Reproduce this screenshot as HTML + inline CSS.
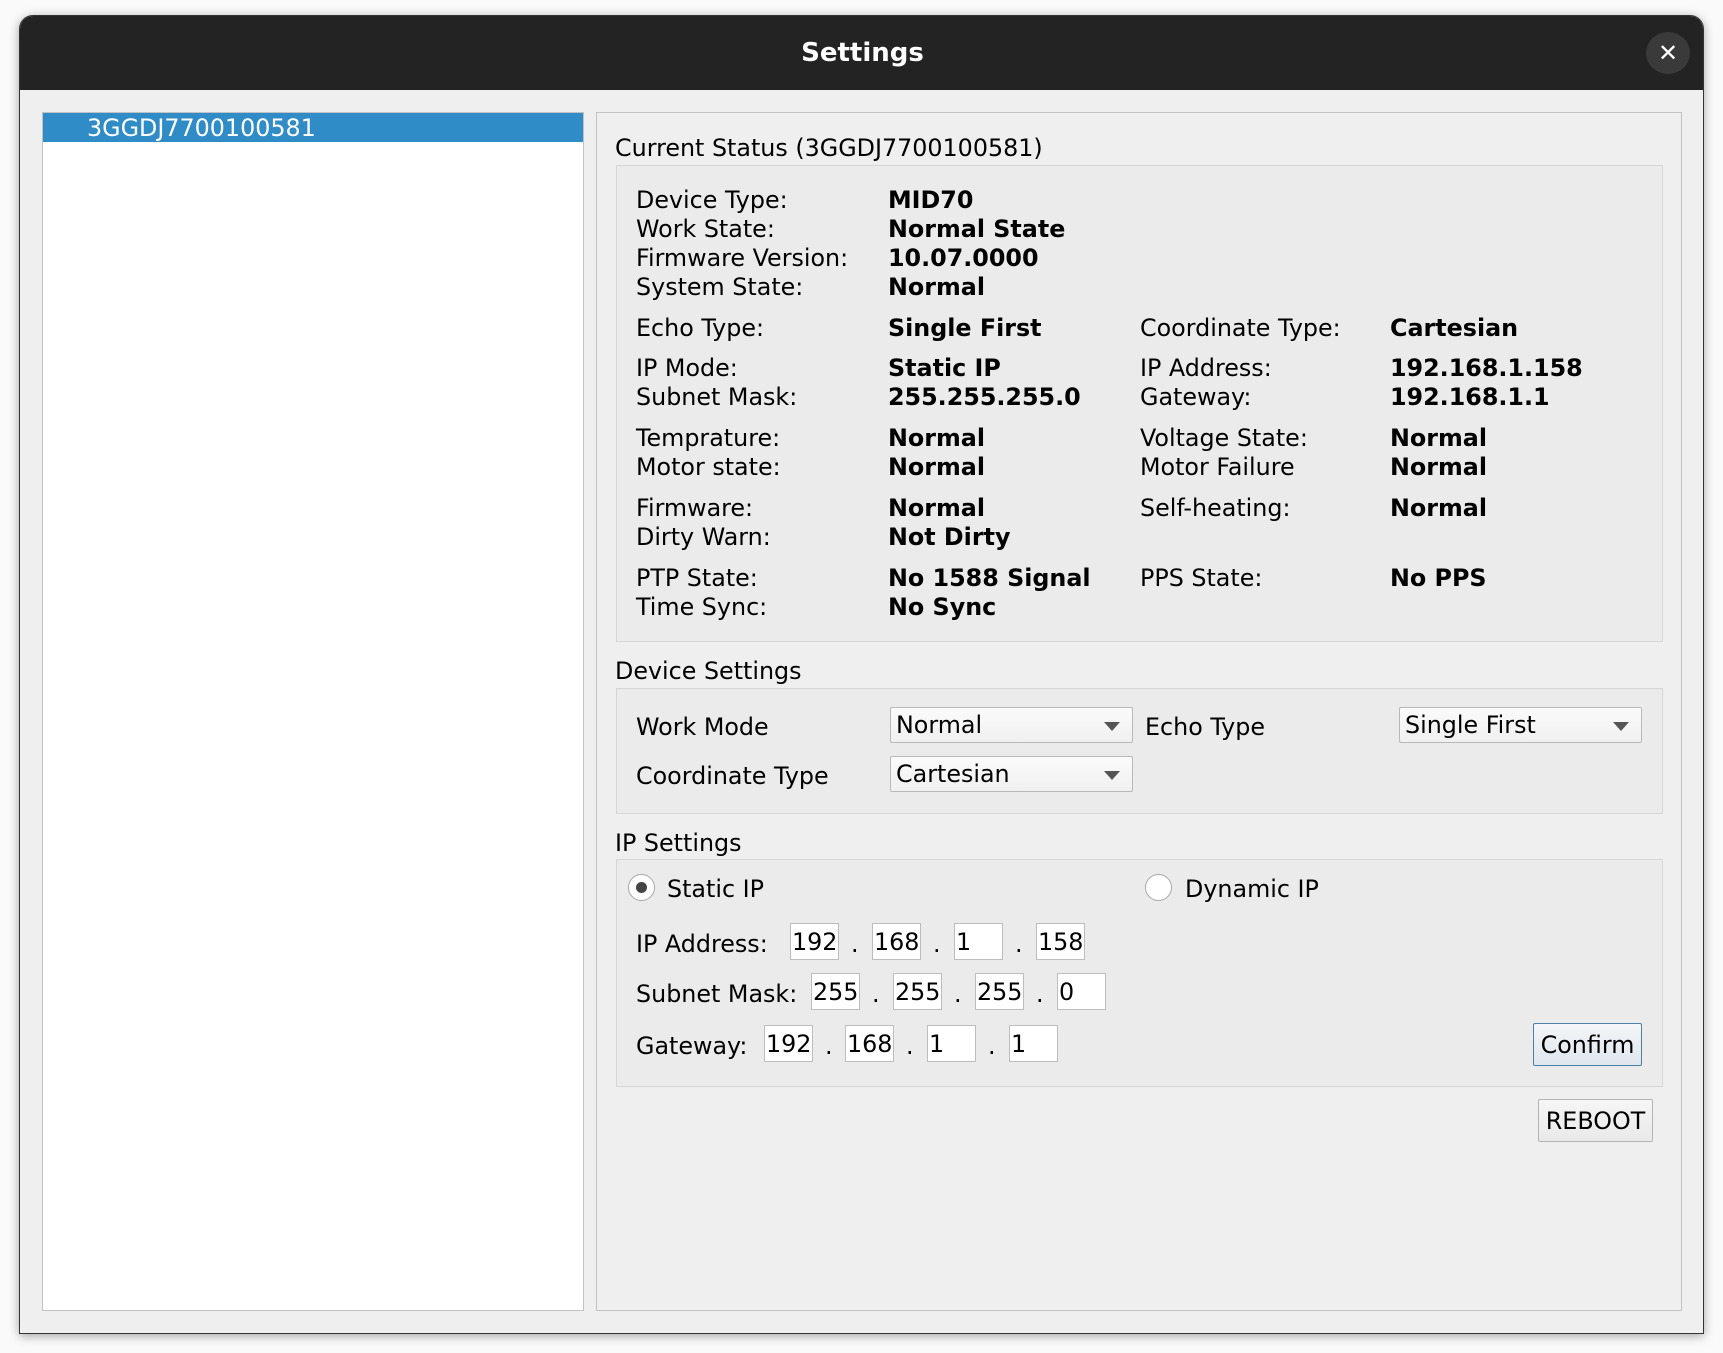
<!DOCTYPE html>
<html><head><meta charset="utf-8"><style>
*{margin:0;padding:0;box-sizing:border-box}
body{width:1723px;height:1353px;background:#fafafa;position:relative;overflow:hidden;font-family:"DejaVu Sans","Liberation Sans",sans-serif;font-size:23.8px;color:#000}
.a{position:absolute;white-space:nowrap}
.win{position:absolute;left:19px;top:15px;width:1685px;height:1319px;background:#efefef;border-radius:14px 14px 0 0;box-shadow:0 2px 10px rgba(0,0,0,.35);overflow:hidden;border:1px solid #333}
.tb{position:absolute;left:0;top:0;width:100%;height:74px;background:#232323}
.box{position:absolute;background:#ebebeb;border:1px solid #d6d6d6}
.lbl{position:absolute;line-height:29px;white-space:nowrap;margin-top:2px}
.v{font-weight:bold}
.combo{position:absolute;height:36px;background:linear-gradient(#fbfbfb,#f0f0f0);border:1px solid #b8b8b8;border-radius:2px;padding-left:5px;line-height:35px}
.combo:after{content:"";position:absolute;right:12px;top:14px;border-left:8px solid transparent;border-right:8px solid transparent;border-top:9px solid #555}
.f{position:absolute;height:37px;background:#fff;border:1px solid #bdbdbd;line-height:37px;padding-left:1px}
.btn{position:absolute;background:linear-gradient(#f6f6f6,#e9e9e9);border:1px solid #b4b4b4;border-radius:2px;text-align:center}
</style></head><body>
<div class="win">
 <div class="tb"></div>
 <div class="a" style="left:0;width:1685px;top:22px;text-align:center;color:#fff;font-weight:bold;font-size:26px;font-family:'DejaVu Sans',sans-serif">Settings</div>
 <div class="a" style="left:1626px;top:16px;width:44px;height:42px;border-radius:50%;background:#3a3a3a;color:#fff;text-align:center;line-height:42px;font-size:24px">✕</div>
</div>
<div class="a" style="left:42px;top:112px;width:542px;height:1199px;background:#fff;border:1px solid #c2c2c2"></div>
<div class="a" style="left:43px;top:113px;width:540px;height:29px;background:#308cc6;color:#fff;line-height:31px;padding-left:44px">3GGDJ7700100581</div>
<div class="a" style="left:596px;top:112px;width:1086px;height:1199px;border:1px solid #c2c2c2;background:#efefef"></div>
<div class="lbl" style="left:615px;top:132px">Current Status (3GGDJ7700100581)</div>
<div class="box" style="left:616px;top:165px;width:1047px;height:477px"></div>
<div class="lbl" style="left:636px;top:184px;line-height:29px">Device Type:<br>Work State:<br>Firmware Version:<br>System State:</div>
<div class="lbl v" style="left:888px;top:184px;line-height:29px">MID70<br>Normal State<br>10.07.0000<br>Normal</div>
<div class="lbl" style="left:636px;top:312px">Echo Type:</div><div class="lbl v" style="left:888px;top:312px">Single First</div>
<div class="lbl" style="left:1140px;top:312px">Coordinate Type:</div><div class="lbl v" style="left:1390px;top:312px">Cartesian</div>
<div class="lbl" style="left:636px;top:352px">IP Mode:<br>Subnet Mask:</div><div class="lbl v" style="left:888px;top:352px">Static IP<br>255.255.255.0</div>
<div class="lbl" style="left:1140px;top:352px">IP Address:<br>Gateway:</div><div class="lbl v" style="left:1390px;top:352px">192.168.1.158<br>192.168.1.1</div>
<div class="lbl" style="left:636px;top:422px">Temprature:<br>Motor state:</div><div class="lbl v" style="left:888px;top:422px">Normal<br>Normal</div>
<div class="lbl" style="left:1140px;top:422px">Voltage State:<br>Motor Failure</div><div class="lbl v" style="left:1390px;top:422px">Normal<br>Normal</div>
<div class="lbl" style="left:636px;top:492px">Firmware:<br>Dirty Warn:</div><div class="lbl v" style="left:888px;top:492px">Normal<br>Not Dirty</div>
<div class="lbl" style="left:1140px;top:492px">Self-heating:</div><div class="lbl v" style="left:1390px;top:492px">Normal</div>
<div class="lbl" style="left:636px;top:562px">PTP State:<br>Time Sync:</div><div class="lbl v" style="left:888px;top:562px">No 1588 Signal<br>No Sync</div>
<div class="lbl" style="left:1140px;top:562px">PPS State:</div><div class="lbl v" style="left:1390px;top:562px">No PPS</div>

<div class="lbl" style="left:615px;top:655px">Device Settings</div>
<div class="box" style="left:616px;top:688px;width:1047px;height:126px"></div>
<div class="lbl" style="left:636px;top:711px">Work Mode</div>
<div class="combo" style="left:890px;top:707px;width:243px">Normal</div>
<div class="lbl" style="left:1145px;top:711px">Echo Type</div>
<div class="combo" style="left:1399px;top:707px;width:243px">Single First</div>
<div class="lbl" style="left:636px;top:760px">Coordinate Type</div>
<div class="combo" style="left:890px;top:756px;width:243px">Cartesian</div>

<div class="lbl" style="left:615px;top:827px">IP Settings</div>
<div class="box" style="left:616px;top:859px;width:1047px;height:228px"></div>
<div class="a" style="left:628px;top:874px;width:27px;height:27px;border-radius:50%;background:#fff;border:1px solid #a8a8a8"></div>
<div class="a" style="left:636px;top:882px;width:11px;height:11px;border-radius:50%;background:#444"></div>
<div class="lbl" style="left:667px;top:873px">Static IP</div>
<div class="a" style="left:1145px;top:874px;width:27px;height:27px;border-radius:50%;background:#fff;border:1px solid #a8a8a8"></div>
<div class="lbl" style="left:1185px;top:873px">Dynamic IP</div>

<div class="lbl" style="left:636px;top:928px">IP Address:</div>
<div class="f" style="left:790px;top:923px;width:49px">192</div><div class="lbl" style="left:851px;top:928px">.</div>
<div class="f" style="left:872px;top:923px;width:49px">168</div><div class="lbl" style="left:933px;top:928px">.</div>
<div class="f" style="left:954px;top:923px;width:49px">1</div><div class="lbl" style="left:1015px;top:928px">.</div>
<div class="f" style="left:1036px;top:923px;width:49px">158</div>

<div class="lbl" style="left:636px;top:978px">Subnet Mask:</div>
<div class="f" style="left:811px;top:973px;width:49px">255</div><div class="lbl" style="left:872px;top:978px">.</div>
<div class="f" style="left:893px;top:973px;width:49px">255</div><div class="lbl" style="left:954px;top:978px">.</div>
<div class="f" style="left:975px;top:973px;width:49px">255</div><div class="lbl" style="left:1036px;top:978px">.</div>
<div class="f" style="left:1057px;top:973px;width:49px">0</div>

<div class="lbl" style="left:636px;top:1030px">Gateway:</div>
<div class="f" style="left:764px;top:1025px;width:49px">192</div><div class="lbl" style="left:825px;top:1030px">.</div>
<div class="f" style="left:845px;top:1025px;width:49px">168</div><div class="lbl" style="left:906px;top:1030px">.</div>
<div class="f" style="left:927px;top:1025px;width:49px">1</div><div class="lbl" style="left:988px;top:1030px">.</div>
<div class="f" style="left:1009px;top:1025px;width:49px">1</div>

<div class="btn" style="left:1533px;top:1023px;width:109px;height:43px;line-height:43px;border-color:#4a7fa8;background:linear-gradient(#f4f6f8,#dfe6ec)">Confirm</div>
<div class="btn" style="left:1538px;top:1099px;width:115px;height:43px;line-height:43px">REBOOT</div>
</body></html>
